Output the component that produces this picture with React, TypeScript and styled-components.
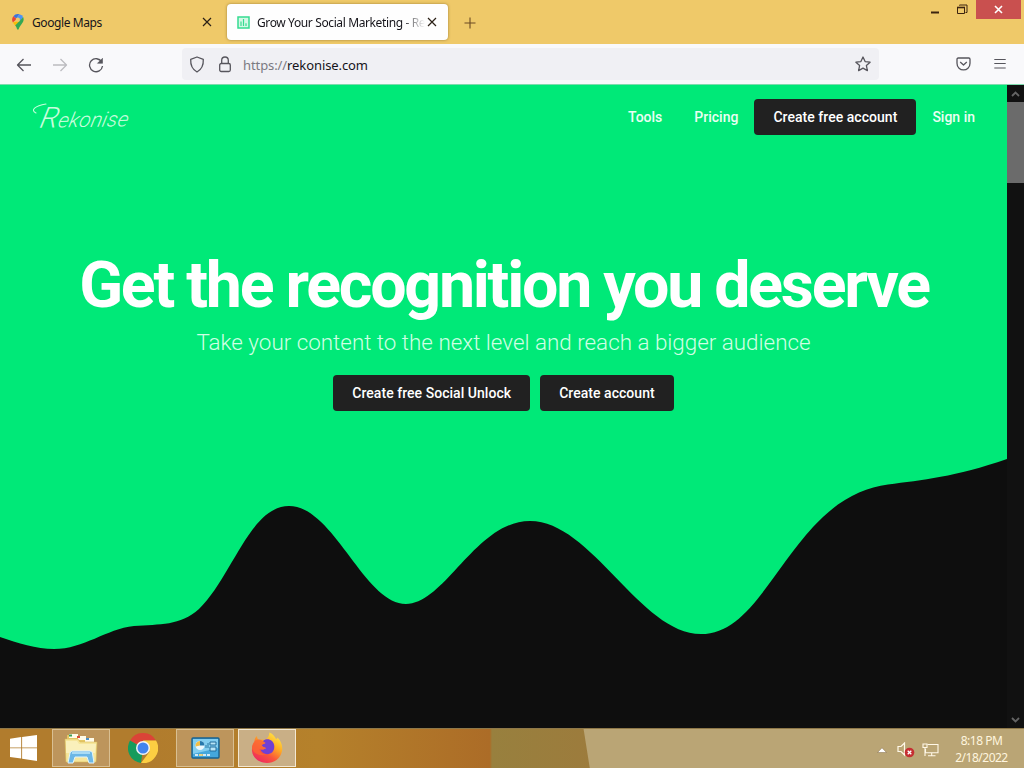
import React from "react";
import styled, { createGlobalStyle } from "styled-components";

function App() {
  return (
    <>
      <GlobalStyle />
      <Style.Screen>
        <TabBar />
        <Toolbar />
        <Style.Viewport>
          <Landing />
          <Scrollbar />
        </Style.Viewport>
        <Taskbar />
      </Style.Screen>
    </>
  );
}

export default App;

function TabBar() {
  return (
    <Style.TabBar>
      <Style.Tab>
        <MapsIcon />
        <Style.TabTitle $spacing={-0.42}>Google Maps</Style.TabTitle>
        <CloseIcon />
      </Style.Tab>
      <Style.Tab $active>
        <RekoniseIcon />
        <Style.TabTitle $spacing={-0.38} $fade>
          Grow Your Social Marketing - Re
        </Style.TabTitle>
        <CloseIcon />
      </Style.Tab>
      <Style.NewTab>
        <svg width="12" height="12" viewBox="0 0 12 12">
          <path d="M6 .5v11M.5 6h11" stroke="#6b4a24" strokeWidth="1.1" />
        </svg>
      </Style.NewTab>
      <Style.WindowControls>
        <Style.WindowButton $width={26}>
          <svg width="10" height="16" viewBox="0 0 10 16">
            <path d="M1 10.500h8" stroke="#3c2410" strokeWidth="2" />
          </svg>
        </Style.WindowButton>
        <Style.WindowButton $width={28}>
          <svg width="12" height="12" viewBox="0 0 12 12" fill="none" stroke="#3c2410">
            <path d="M3.500 1.500V1h7.500v7.500h-1.500" />
            <path d="M1.500 3.500h7v6h-7z" />
            <path d="M1 3.500h8" strokeWidth="1.600" />
          </svg>
        </Style.WindowButton>
        <Style.WindowButton $width={45} $close>
          <svg width="9" height="9" viewBox="0 0 9 9">
            <path d="M1 1l7 7M8 1L1 8" stroke="#fff" strokeWidth="1.600" />
          </svg>
        </Style.WindowButton>
      </Style.WindowControls>
    </Style.TabBar>
  );
}

function Toolbar() {
  return (
    <Style.Toolbar>
      <Style.NavButtons>
        <svg width="16" height="16" viewBox="0 0 16 16" {...stroke}>
          <path d="M15 8H1.500M7.500 2L1.500 8l6 6" />
        </svg>
        <svg width="16" height="16" viewBox="0 0 16 16" {...stroke} stroke="#bcbcc0">
          <path d="M1 8h13.500M8.500 2l6 6-6 6" />
        </svg>
        <svg width="16" height="16" viewBox="0 0 16 16" {...stroke}>
          <path d="M13.700 5A6.500 6.500 0 1 0 14.500 9" />
          <path d="M14.500 1.300v5h-5z" fill="#56555c" strokeWidth=".6" />
        </svg>
      </Style.NavButtons>
      <Style.UrlBar>
        <svg width="16" height="17" viewBox="0 0 16 17" {...stroke}>
          <path d="M8 1l6.300 2.400c.3 5.800-1.500 10-6.300 12.600C3.200 13.400 1.400 9.200 1.700 3.400z" />
        </svg>
        <svg width="12" height="17" viewBox="0 0 12 17" {...stroke}>
          <rect x=".7" y="7.500" width="10.600" height="8" rx="1.500" />
          <path d="M2.700 7.500V4.300a3.300 3.300 0 0 1 6.600 0v3.200" />
        </svg>
        <Style.Url>
          <span>https://</span>rekonise.com
        </Style.Url>
        <svg width="16" height="16" viewBox="0 0 16 16" {...stroke}>
          <path d="M8 1l2.100 4.600 5 .6-3.700 3.400 1 5L8 12.100l-4.400 2.500 1-5L.9 6.200l5-.6z" />
        </svg>
      </Style.UrlBar>
      <Style.ToolbarActions>
        <svg width="15" height="14" viewBox="0 0 15 14" {...stroke}>
          <path d="M2.200 1h10.600c.8 0 1.200.5 1.200 1.200v4c0 9-13 9-13 0v-4C1 1.500 1.400 1 2.200 1z" />
          <path d="M4.200 5l3.300 3 3.300-3" />
        </svg>
        <svg width="12" height="12" viewBox="0 0 12 12" {...stroke} strokeWidth="1.100">
          <path d="M.3 1.500h11.400M.3 5.500h11.400M.3 10h11.400" />
        </svg>
      </Style.ToolbarActions>
    </Style.Toolbar>
  );
}

function Landing() {
  return (
    <Style.Landing>
      <Wave />
      <Style.Header>
        <Style.Logo>
          <svg width="36" height="34" viewBox="0 0 36 34">
            <path
              d="M4 14C-2 11 3 7 14 5"
              fill="none"
              stroke="#c4ffdc"
              strokeWidth="1.100"
              strokeLinecap="round"
            />
          </svg>
          <span>Rekonise</span>
        </Style.Logo>
        <Style.Nav>
          <Style.NavLink>Tools</Style.NavLink>
          <Style.NavLink>Pricing</Style.NavLink>
          <Style.Button>Create free account</Style.Button>
          <Style.NavLink>Sign in</Style.NavLink>
        </Style.Nav>
      </Style.Header>
      <Style.Hero>
        <Style.Title>Get the recognition you deserve</Style.Title>
        <Style.Subtitle>
          Take your content to the next level and reach a bigger audience
        </Style.Subtitle>
        <Style.HeroActions>
          <Style.Button>Create free Social Unlock</Style.Button>
          <Style.Button>Create account</Style.Button>
        </Style.HeroActions>
      </Style.Hero>
    </Style.Landing>
  );
}

function Wave() {
  return (
    <Style.Wave viewBox="0 85 1007 643" preserveAspectRatio="none">
      <path
        fill="#0e0e0e"
        d="M0 637C18 643 36 649 54 649C84 649 106 629 134 626C160 624 180 626 199 609C232 577 250 506 289 506C334 506 364 604 406 604C445 604 476 521 530 521C592 521 640 634 701 634C747 634 770 574 813 527C838 500 862 488 888 484.500C922 480 955 477 1007 459V728H0Z"
      />
    </Style.Wave>
  );
}

function Scrollbar() {
  return (
    <Style.Scrollbar>
      <Style.ScrollArrow>
        <svg width="9" height="6" viewBox="0 0 9 6">
          <path d="M1 5l3.500-3.500L8 5" fill="none" stroke="#646464" strokeWidth="1.800" />
        </svg>
      </Style.ScrollArrow>
      <Style.ScrollThumb />
      <Style.ScrollArrow $bottom>
        <svg width="9" height="6" viewBox="0 0 9 6">
          <path d="M1 1l3.500 3.500L8 1" fill="none" stroke="#646464" strokeWidth="1.800" />
        </svg>
      </Style.ScrollArrow>
    </Style.Scrollbar>
  );
}

function Taskbar() {
  return (
    <Style.Taskbar>
      <Style.Start>
        <svg width="27" height="26" viewBox="0 0 27 26" fill="#fff">
          <path d="M0 3.700l11.200-1.600v10.400H0zM12.100 2L27 0v12.500H12.100zM0 13.300h11.200v10.300L0 22zM12.100 13.300H27V26l-14.900-2.200z" />
        </svg>
      </Style.Start>
      <Style.TaskButton $open>
        <FolderIcon />
      </Style.TaskButton>
      <Style.TaskButton>
        <ChromeIcon />
      </Style.TaskButton>
      <Style.TaskButton $open>
        <ControlPanelIcon />
      </Style.TaskButton>
      <Style.TaskButton $open $active>
        <FirefoxIcon />
      </Style.TaskButton>
      <Style.Tray>
        <svg width="10" height="6" viewBox="0 0 10 6">
          <path d="M.5 5.500L5 .8l4.500 4.700z" fill="#fff" stroke="#806a48" strokeWidth=".5" />
        </svg>
        <svg width="18" height="16" viewBox="0 0 18 16">
          <path d="M1 4.500h3L7.500 1v12L4 9.500H1z" fill="none" stroke="#fff8e8" strokeWidth="1.200" />
          <circle cx="12.500" cy="10.500" r="4.800" fill="#c52e32" />
          <path d="M10.700 8.700l3.600 3.600m0-3.600l-3.600 3.600" stroke="#fff" strokeWidth="1.300" />
        </svg>
        <svg width="17" height="14" viewBox="0 0 17 14" fill="none" stroke="#fff8e8" strokeWidth="1.100">
          <path d="M5.500 1.500H16v8.200H3.500V6M9.700 10v2.500M6 12.800h7.500" />
          <path d="M1 1h4v3.500H1zM3 4.500V13" />
        </svg>
      </Style.Tray>
      <Style.Clock>
        <div>8:18 PM</div>
        <div>2/18/2022</div>
      </Style.Clock>
    </Style.Taskbar>
  );
}

function CloseIcon() {
  return (
    <svg width="10" height="10" viewBox="0 0 10 10">
      <path d="M1 1l8 8M9 1L1 9" stroke="#2b2016" strokeWidth="1.200" />
    </svg>
  );
}

function MapsIcon() {
  return (
    <svg width="12" height="16" viewBox="0 0 12 16">
      <path d="M1.400 2.300A5.700 5.700 0 0 1 7.500.3L4.300 4.500z" fill="#3b73e0" />
      <path d="M1.400 2.300L4.600 5 .9 8.500C-.4 6.500 0 4 1.400 2.300z" fill="#e94335" />
      <path d="M7.500.3a5.700 5.700 0 0 1 3.700 3L7.800 7.300 4.300 4.500z" fill="#4b94f5" />
      <path d="M4.500 7.500L.9 8.500l2.200 2.900 4.800-4z" fill="#fbbc05" />
      <path d="M11.200 3.300c2 5-3.400 7-4.600 12.200H5.200c-.4-1.700-1-3-2.100-4.100z" fill="#34a853" />
      <circle cx="5.900" cy="5.700" r="2.100" fill="#efc969" />
    </svg>
  );
}

function RekoniseIcon() {
  return (
    <svg width="13" height="13" viewBox="0 0 13 13" fill="none" stroke="#35dc91">
      <path d="M1 1h11v11H1z" fill="#d5f8e6" strokeWidth="1.500" />
      <path d="M4 10V5.500M6.500 10V3M9 10V7.200" strokeWidth="1.200" />
    </svg>
  );
}

function FolderIcon() {
  return (
    <svg width="34" height="31" viewBox="0 0 34 31">
      <path d="M3 2h10l2 3h15v20H3z" fill="#e5c764" />
      <path d="M5 1h9v4H5zM14 3h8v4h-8zM21 5h9v4h-9z" fill="#fffbe9" />
      <path d="M5 1.500h3v2H5z" fill="#3b9b58" />
      <path d="M13 3h3v2h-3z" fill="#dc4c38" />
      <path d="M22 5h3v2h-3z" fill="#4a91cc" />
      <path d="M1 6h13l2 3h17l-1 20H2z" fill="#f6e69b" stroke="#d9bb59" strokeWidth=".6" />
      <path d="M2 8h11l2 3h17l-1 9H2z" fill="#faf0bb" />
      <path d="M4 30l2-10q.5-2 2.500-2H26q2 0 2.400 2l1.600 10h-5l-2-6H11l-2 6z" fill="#6cb7e6" stroke="#e0f4fc" />
      <path d="M8 20h18" stroke="#a9dbf5" strokeWidth="2" />
    </svg>
  );
}

function ChromeIcon() {
  return (
    <svg width="30" height="30" viewBox="0 0 30 30">
      <path d="M15 15L2 7.500A15 15 0 0 1 28 7.500H15z" fill="#db4437" />
      <path d="M15 15l-2 15A15 15 0 0 1 2 7.500z" fill="#159b5c" />
      <path d="M28 7.500A15 15 0 0 1 13 30l8.500-11.300L15 7.500z" fill="#fcce42" />
      <circle cx="15" cy="15" r="7" fill="#f4f4f4" />
      <circle cx="15" cy="15" r="5.500" fill="#4384ee" />
    </svg>
  );
}

function ControlPanelIcon() {
  return (
    <svg width="29" height="23" viewBox="0 0 29 23">
      <rect x="1" y="1" width="27" height="20" rx="1" fill="#45a7dc" stroke="#19628f" strokeWidth="1.400" />
      <path d="M2 2h25v9L2 17z" fill="#83cef0" />
      <circle cx="9" cy="8.500" r="4.500" fill="#e9f7fd" />
      <path d="M9 8.500V4a4.500 4.500 0 0 0-4.400 5.500z" fill="#f1bd45" />
      <path d="M9 8.500V4a4.500 4.500 0 0 1 4.500 4.500z" fill="#2778ac" />
      <path d="M15 11V8M17 11V6" stroke="#2878a4" />
      <path d="M19 5h6v3h-6zM19 10h6v4h-6z" fill="#b8e5f7" stroke="#226d9b" />
      <path d="M4 18h15" stroke="#fff" strokeWidth="1.500" strokeDasharray="3 1" />
      <path d="M8 18h4" stroke="#f0c85d" strokeWidth="1.500" />
    </svg>
  );
}

function FirefoxIcon() {
  return (
    <svg width="32" height="32" viewBox="0 0 32 32">
      <defs>
        <linearGradient id="flame" x1=".85" y1="0" x2=".2" y2="1">
          <stop offset="0" stopColor="#fff04d" />
          <stop offset=".38" stopColor="#ffab24" />
          <stop offset=".67" stopColor="#fa553b" />
          <stop offset="1" stopColor="#ed2465" />
        </linearGradient>
      </defs>
      <path
        d="M6 4c0 2 .8 3.200 2 4 2-.7 4-.7 6 0 2-1 4-3.500 4.500-7.500C22 2 24 5 25 7c1.200 0 1.500-1 1.500-1.500C30 9 32 14 31 19c-1.500 8-8 12-15 12S2 27 1 19c-.4-4 .7-7 2.500-9C3.300 7.500 4.300 5.200 6 4z"
        fill="url(#flame)"
      />
      <path d="M12 9c2-2 6-2.500 9 0 3 3 3 8 .5 11-4 4-11 2-12-3 2 1 4 .5 5.500-1-2-1-3.500-1-4.500-3 1-1 3-1 4-2-1-.7-2.500-.5-2.500-2z" fill="#7140d3" />
      <path d="M3 10c2-3 6-3.500 9-1 .5 1 1.500 1.200 2.500 2-1 1-3 1-4 2 1 2 3 2 4.500 3-3 3-6 1-7 1 1 4 4 6 8 5-6 3-13 0-15-5 0-3 .5-5 2-7z" fill="#fb6635" opacity=".8" />
    </svg>
  );
}

const stroke = {
  fill: "none",
  stroke: "#56555c",
  strokeWidth: 1.3,
  strokeLinejoin: "round" as const,
};

const GlobalStyle = createGlobalStyle`
  * {
    box-sizing: border-box;
  }

  body {
    margin: 0;
    overflow: hidden;
  }

  svg {
    display: block;
    flex-shrink: 0;
  }
`;

const Style = {
  Screen: styled.div`
    display: flex;
    flex-direction: column;
    width: 1024px;
    height: 768px;
    overflow: hidden;
    font-family: "Noto Sans", "Open Sans", sans-serif;
  `,
  TabBar: styled.div`
    display: flex;
    height: 44px;
    background: #efc969;
  `,
  Tab: styled.div<{ $active?: boolean }>`
    display: flex;
    align-items: center;
    width: ${({ $active }) => ($active ? 221 : 223)}px;
    height: 36px;
    margin: 4px ${({ $active }) => ($active ? 0 : 4)}px 0 0;
    padding: 0 11px 0 ${({ $active }) => ($active ? 10 : 12)}px;
    border-radius: 4px;
    background: ${({ $active }) => ($active ? "#fefefe" : "transparent")};
    box-shadow: ${({ $active }) => ($active ? "0 0 3px rgba(90, 65, 15, 0.55)" : "none")};
  `,
  TabTitle: styled.div<{ $spacing: number; $fade?: boolean }>`
    flex: 1;
    min-width: 0;
    margin: 1px 2px 0 ${({ $fade }) => ($fade ? 7 : 8)}px;
    white-space: nowrap;
    font-size: 12px;
    letter-spacing: ${({ $spacing }) => $spacing}px;
    color: #15141a;
    mask-image: ${({ $fade }) =>
      $fade ? "linear-gradient(to left, transparent, #000 24px)" : "none"};
  `,
  NewTab: styled.div`
    margin: 17px 0 0 16px;
  `,
  WindowControls: styled.div`
    display: flex;
    align-items: flex-start;
    margin-left: auto;
    padding-right: 3px;
  `,
  WindowButton: styled.div<{ $width: number; $close?: boolean }>`
    display: flex;
    align-items: center;
    justify-content: center;
    width: ${({ $width }) => $width}px;
    height: 19px;
    background: ${({ $close }) => ($close ? "#c9504f" : "transparent")};
  `,
  Toolbar: styled.div`
    display: flex;
    align-items: center;
    height: 41px;
    background: #f9f9fb;
    border-bottom: 1px solid #7fdcae;
  `,
  NavButtons: styled.div`
    display: flex;
    gap: 20px;
    width: 182px;
    padding: 1px 0 0 16px;
  `,
  UrlBar: styled.div`
    display: flex;
    align-items: center;
    width: 697px;
    height: 32px;
    padding: 0 8px 0 7px;
    gap: 14px;
    border-radius: 4px;
    background: #f0f0f4;
  `,
  Url: styled.div`
    flex: 1;
    margin-left: -2px;
    padding-top: 1px;
    font-size: 13px;
    letter-spacing: -0.09px;
    color: #15141a;

    span {
      color: #7b7a82;
    }
  `,
  ToolbarActions: styled.div`
    display: flex;
    align-items: center;
    gap: 23px;
    margin: 0 18px 0 auto;
  `,
  Viewport: styled.div`
    display: flex;
    height: 643px;
    background: #0e0e0e;
  `,
  Landing: styled.main`
    position: relative;
    width: 1007px;
    height: 643px;
    background: #00e978;
    font-family: Roboto, sans-serif;
    color: #fff;
  `,
  Wave: styled.svg`
    position: absolute;
    inset: 0;
    width: 100%;
    height: 100%;
  `,
  Header: styled.header`
    position: relative;
    display: flex;
    align-items: center;
    justify-content: space-between;
    height: 64px;
    padding: 0 16px 0 32px;
  `,
  Logo: styled.div`
    position: relative;
    padding: 2px 0 0 9px;
    font-size: 21px;
    line-height: 32px;
    font-weight: 300;
    font-style: italic;
    color: #c8fddd;

    svg {
      position: absolute;
      left: 0;
      top: 0;
    }

    span {
      display: block;
      letter-spacing: 0.2px;
      transform: skewX(-14deg) rotate(-1deg);
    }

    span::first-letter {
      font-size: 29px;
    }
  `,
  Nav: styled.nav`
    display: flex;
    align-items: center;
  `,
  NavLink: styled.a`
    padding: 0 16px;
    font-size: 14px;
    font-weight: 500;
    color: #eafff3;
  `,
  Button: styled.button`
    height: 36px;
    padding: 0 19px 1px;
    border: 0;
    border-radius: 4px;
    background: #212121;
    font-family: Roboto, sans-serif;
    font-size: 14px;
    font-weight: 500;
    letter-spacing: 0.04px;
    color: #fff;
  `,
  Hero: styled.section`
    position: relative;
    display: flex;
    flex-direction: column;
    align-items: center;
    padding-top: 98px;
  `,
  Title: styled.h1`
    margin: 0;
    padding-left: 1px;
    font-size: 64.5px;
    line-height: 76px;
    font-weight: 700;
    letter-spacing: -2.25px;
    word-spacing: -0.6px;
    white-space: nowrap;
  `,
  Subtitle: styled.p`
    margin: 5px 0 0;
    font-size: 22.4px;
    line-height: 28px;
    font-weight: 300;
    white-space: nowrap;
    color: #d0ffe4;
  `,
  HeroActions: styled.div`
    display: flex;
    gap: 10px;
    margin-top: 19px;
  `,
  Scrollbar: styled.div`
    display: flex;
    flex-direction: column;
    width: 17px;
    background: #111;
  `,
  ScrollArrow: styled.div<{ $bottom?: boolean }>`
    display: flex;
    align-items: center;
    justify-content: center;
    height: 17px;
    margin-top: ${({ $bottom }) => ($bottom ? "auto" : 0)};
  `,
  ScrollThumb: styled.div`
    height: 81px;
    background: #6b6b6b;
  `,
  Taskbar: styled.footer`
    display: flex;
    height: 40px;
    border-top: 1px solid #8e7849;
    background:
      linear-gradient(81deg, transparent 582px, #baa575 583px),
      linear-gradient(90deg, #b17c2d 0, #b17c2d 150px, #b5812b 320px, #ac6c27 490px, #98803e 492px, #9d7b3c 600px);
  `,
  Start: styled.div`
    width: 52px;
    padding: 6px 0 0 10px;
  `,
  TaskButton: styled.div<{ $open?: boolean; $active?: boolean }>`
    display: flex;
    align-items: center;
    justify-content: center;
    width: 58px;
    height: 38px;
    margin-right: 4px;
    border: 1px solid
      ${({ $open, $active }) => ($active ? "#f4e8d2" : $open ? "#d9bf92" : "transparent")};
    background: ${({ $open, $active }) => ($active ? "#c9af86" : $open ? "#bd955c" : "transparent")};
  `,
  Tray: styled.div`
    display: flex;
    align-items: center;
    gap: 7px;
    margin-left: auto;
    padding-top: 2px;

    svg:first-child {
      margin-right: 3px;
    }
  `,
  Clock: styled.div`
    width: 85px;
    padding: 3px 0 0;
    font-size: 12px;
    line-height: 17px;
    letter-spacing: -0.5px;
    text-align: center;
    color: #fff5df;
  `,
};
